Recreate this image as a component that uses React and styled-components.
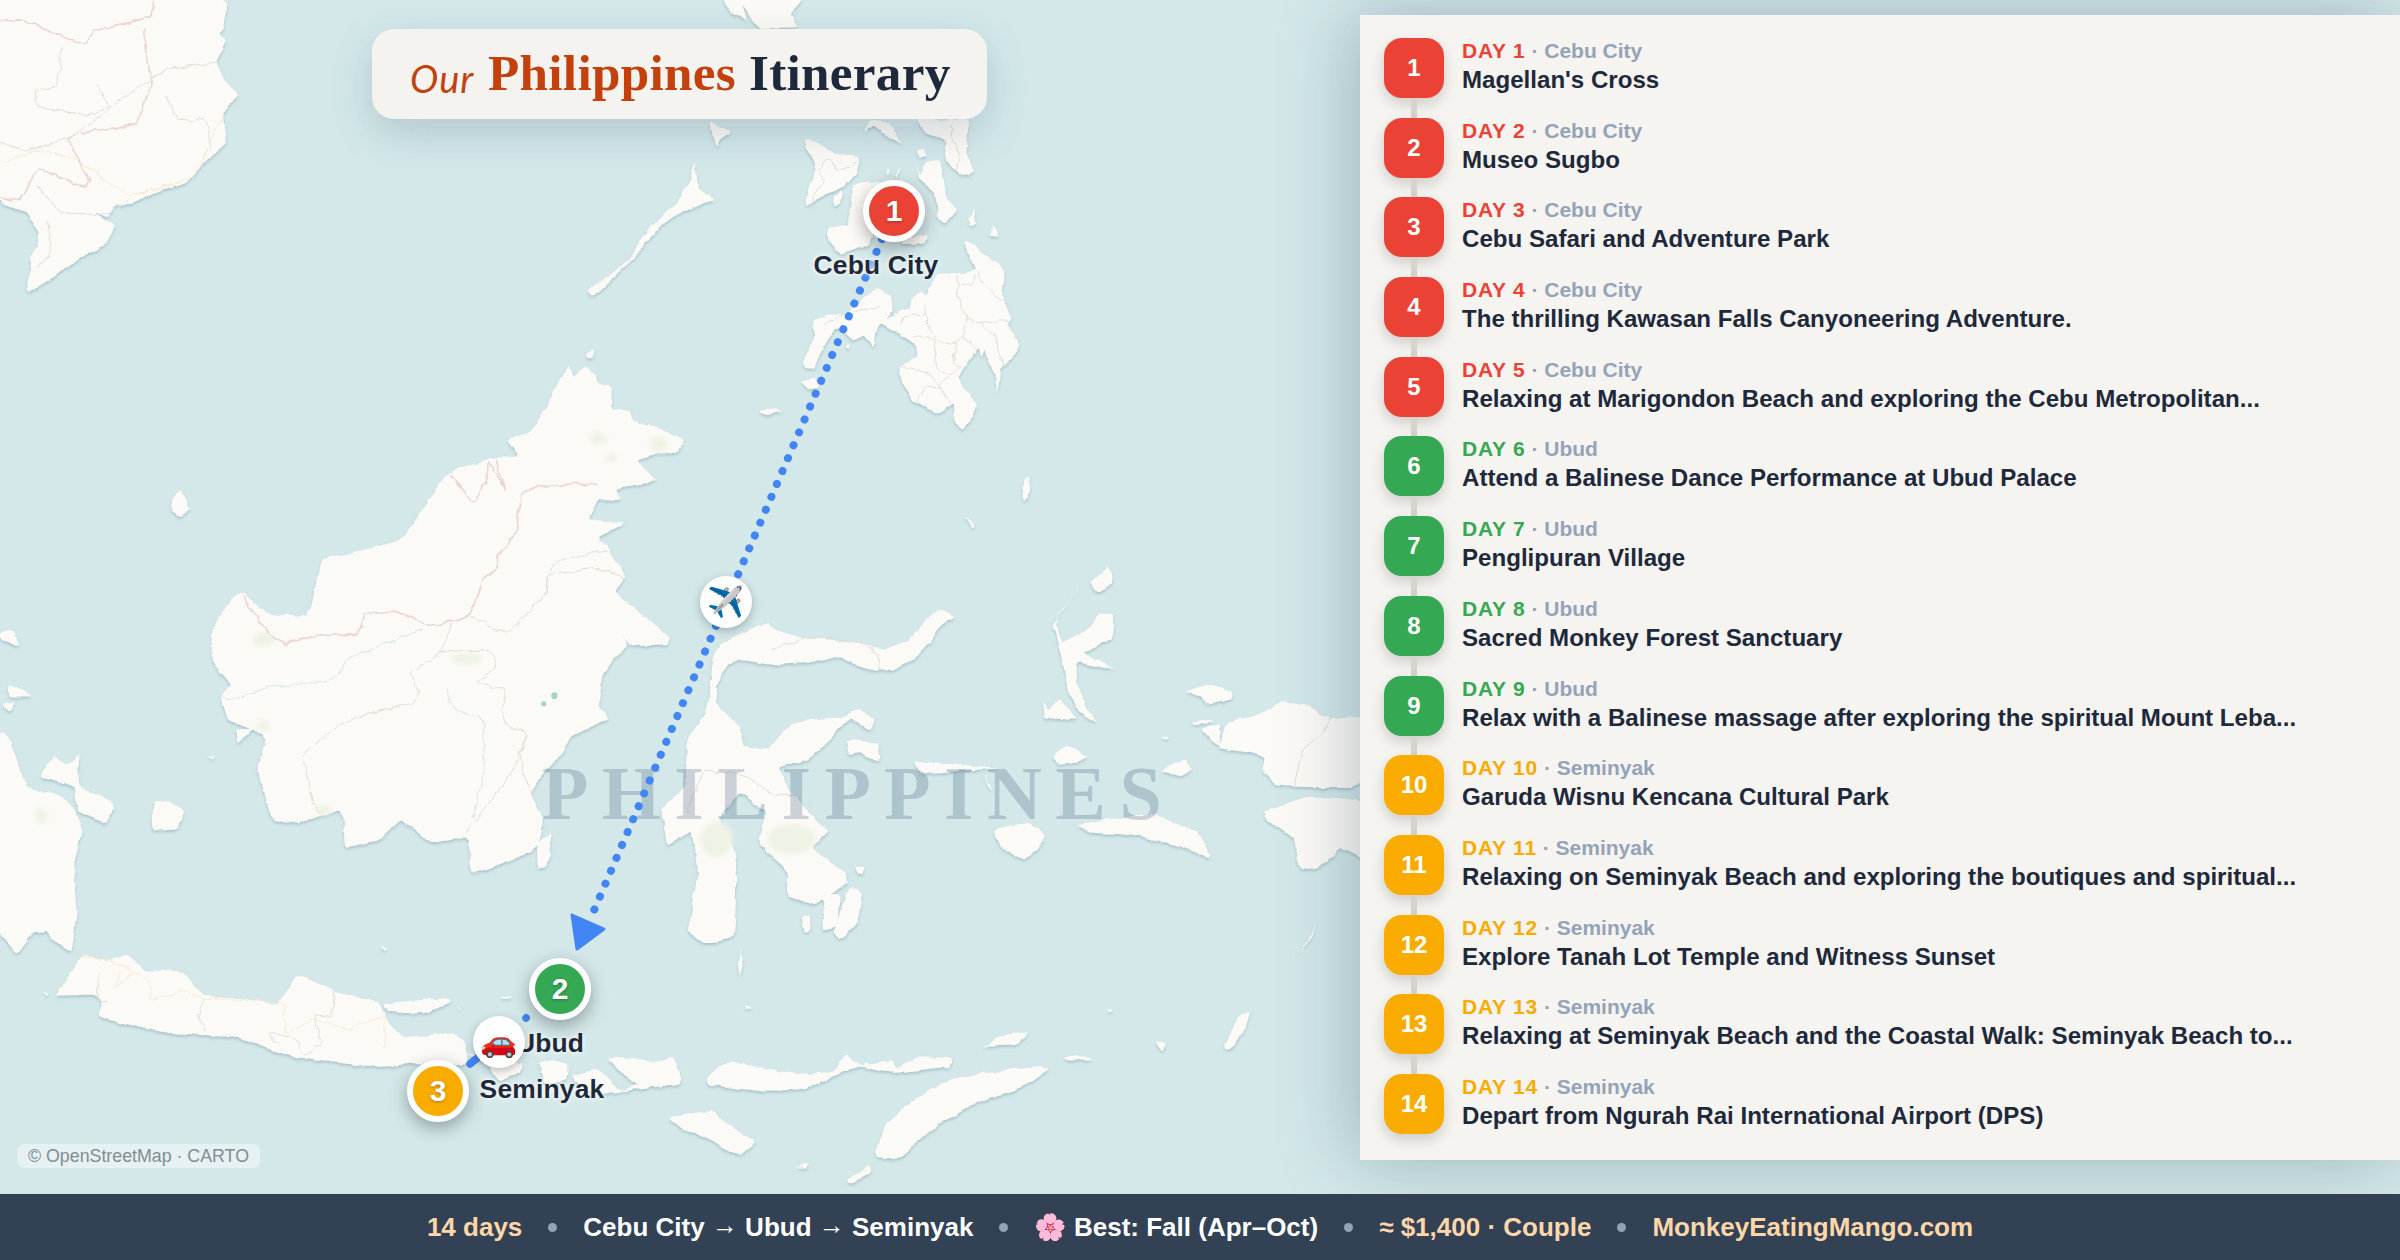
import React from "react";
import styled, { createGlobalStyle } from "styled-components";

const GlobalStyle = createGlobalStyle`
  html, body { margin: 0; padding: 0; background: #d4e8ea; }
  body { font-family: "Liberation Sans", Arial, sans-serif; }
  #root { width: 2400px; height: 1260px; overflow: hidden; }
`;

/* ---------- map data: each sheet keeps the coordinates it was traced in ---------- */
const spline = (pts, sheet, closed = true) => {
  const [ox, oy, sx, sy] = sheet;
  const p = pts.map(([x, y]) => [ox + x * sx, oy + y * sy]);
  const n = p.length;
  const at = (i) => (closed ? p[(i + n) % n] : p[Math.max(0, Math.min(n - 1, i))]);
  let d = `M${p[0][0].toFixed(1)} ${p[0][1].toFixed(1)}`;
  const end = closed ? n : n - 1;
  for (let i = 0; i < end; i++) {
    const a = at(i - 1), b = at(i), c = at(i + 1), e = at(i + 2);
    const k = 0.08;
    d += `C${(b[0] + (c[0] - a[0]) * k).toFixed(1)} ${(b[1] + (c[1] - a[1]) * k).toFixed(1)} ${(c[0] - (e[0] - b[0]) * k).toFixed(1)} ${(c[1] - (e[1] - b[1]) * k).toFixed(1)} ${c[0].toFixed(1)} ${c[1].toFixed(1)}`;
  }
  return closed ? d + "Z" : d;
};

const Z1 = [0, 0, 0.6378, 1 / 3];
const Z5 = [0, 320, 0.4464, 0.3827];
const Z6 = [600, 500, 0.4847, 0.4464];
const Z7 = [0, 900, 0.4464, 1 / 3];
const Z9 = [760, 110, 1 / 3, 1 / 3];
const Z11 = [1150, 600, 1 / 3, 1 / 3];

const sheets = [
  {
    t: Z1,
    land: [
      [[340,-6],[350,60],[345,100],[355,130],[340,190],[360,260],[370,290],[350,340],[355,420],[335,470],[320,490],[290,550],[240,580],[210,610],[180,620],[170,650],[150,640],[180,680],[165,735],[130,770],[85,830],[45,875],[40,860],[50,780],[60,700],[40,640],[0,600],[-10,300],[-10,-6]],
      [[1135,-6],[1150,40],[1170,60],[1165,20],[1190,80],[1250,84],[1240,40],[1255,-6]],
      [[1115,368],[1145,395],[1130,420],[1125,440],[1118,410]],
      [[1090,490],[1095,560],[1120,600],[1100,610],[1040,670],[1000,760],[930,890],[925,870],[985,780],[1020,680],[1060,610],[1080,550]],
    ],
    pink: [
      [[0,65],[40,60],[70,90],[130,130],[150,90],[235,50],[240,0]],
      [[225,90],[235,250],[210,370],[110,410],[140,540],[130,560],[60,510],[30,600],[0,590]],
    ],
    grey: [
      [[95,140],[90,250],[55,280],[60,320],[150,340],[260,210],[340,190]],
      [[260,290],[280,360],[320,360],[330,440]],
      [[150,250],[170,330],[110,410],[40,450],[0,430]],
      [[60,560],[100,640],[170,640],[200,600]],
      [[75,660],[80,760],[60,800]],
    ],
    road: [[[0,490],[60,450],[120,480],[200,580],[300,530],[350,340]]],
  },
  {
    t: Z5,
    land: [
      [[1275,120],[1285,150],[1315,122],[1345,170],[1370,180],[1370,230],[1410,235],[1420,265],[1480,285],[1530,310],[1520,340],[1430,370],[1465,420],[1380,440],[1390,470],[1340,470],[1320,520],[1395,530],[1340,570],[1365,600],[1400,670],[1380,710],[1440,770],[1500,830],[1490,850],[1410,850],[1395,820],[1400,850],[1350,930],[1345,1010],[1360,1040],[1280,1090],[1260,1130],[1190,1230],[1215,1300],[1200,1380],[1060,1445],[1050,1360],[1020,1355],[960,1360],[900,1305],[850,1355],[775,1375],[765,1280],[670,1315],[610,1300],[580,1170],[595,1100],[560,1070],[510,1040],[495,985],[515,950],[475,890],[480,800],[525,720],[545,715],[600,765],[690,770],[720,630],[780,610],[900,570],[1000,405],[1090,365],[1160,355],[1140,310],[1190,290],[1240,190]],
      [[385,470],[405,450],[425,490],[405,515],[390,500]],
      [[1310,85],[1328,78],[1325,95],[1310,97]],
      [[95,1190],[120,1140],[150,1160],[175,1135],[180,1220],[255,1260],[240,1310],[175,1280],[165,1220]],
      [[345,1265],[380,1258],[410,1290],[395,1330],[345,1330]],
      [[0,1080],[20,1090],[60,1220],[110,1235],[155,1260],[185,1330],[165,1440],[165,1580],[-10,1580],[-10,1080]],
      [[0,820],[30,812],[40,848],[10,840]],
      [[20,955],[40,960],[70,985],[20,985]],
      [[5,1000],[30,1000],[22,1022],[10,1020]],
      [[533,1072],[565,1070],[535,1102]],
      [[1205,1370],[1235,1345],[1225,1425],[1205,1425]],
      [[470,1140],[482,1138],[478,1148]],
    ],
    forest: [[590,835,24,20],[1475,325,20,22],[1340,310,20,16],[1370,362,14,12],[1045,885,36,16],[590,1060,16,14],[725,1280,20,14],[92,1295,14,22]],
    pool: [[1218,1003,6,7],[1242,982,7,9]],
    pink: [
      [[545,720],[590,800],[640,845],[720,825],[800,820],[820,770],[900,765],[960,800],[1050,770],[1080,680],[1110,650],[1120,600],[1155,560],[1170,450],[1250,430],[1340,430]],
      [[1010,405],[1060,475],[1090,420],[1095,370],[1130,440],[1110,370]],
    ],
    grey: [
      [[1050,770],[1135,815],[1220,720],[1230,665],[1340,650],[1405,680]],
      [[1015,790],[985,870],[925,920],[935,970],[920,1005],[815,1030],[750,1070],[680,1140],[700,1260],[720,1290]],
      [[985,870],[1090,860],[1110,910],[1070,945],[1125,965],[1130,1050],[1180,1085],[1135,1200],[1045,1340]],
      [[1180,1085],[1165,1130],[1185,1230],[1225,1230]],
    ],
    water: [
      [[945,810],[790,880],[740,940],[600,960],[530,990],[500,985]],
      [[1000,960],[1005,1000],[1040,1030],[1085,1050],[1080,1200],[1060,1300]],
      [[1220,720],[1240,640],[1360,600]],
    ],
  },
  {
    t: Z6,
    land: [
      [[730,260],[700,290],[660,345],[610,378],[570,382],[530,372],[500,350],[430,365],[350,368],[280,358],[250,385],[240,450],[290,510],[300,550],[350,555],[395,500],[500,485],[530,470],[565,490],[555,515],[515,490],[480,530],[430,580],[370,600],[400,660],[450,720],[470,740],[440,780],[500,830],[510,860],[440,905],[385,880],[385,830],[330,770],[340,700],[290,660],[250,710],[280,800],[275,975],[210,990],[185,960],[200,840],[190,745],[140,770],[130,690],[175,640],[180,540],[215,480],[225,430],[235,350],[250,325],[320,285],[345,278],[380,298],[430,308],[520,318],[590,335],[640,310],[670,270],[700,245]],
      [[1050,150],[1055,185],[1030,205],[1015,185]],
      [[990,195],[945,260],[945,300],[955,320],[1005,290],[1030,255],[1060,260],[1055,310],[1000,340],[1060,380],[985,365],[985,420],[1025,500],[985,470],[965,420],[950,340],[935,280]],
      [[810,740],[880,725],[920,755],[880,805],[830,780]],
      [[990,730],[1080,710],[1140,705],[1230,745],[1260,800],[1180,770],[1085,750],[1010,745]],
      [[1370,705],[1460,665],[1580,680],[1580,800],[1530,780],[1480,825],[1445,825],[1430,760]],
      [[650,585],[700,590],[820,600],[700,610],[660,610]],
      [[510,540],[570,545],[575,585],[540,570],[515,570]],
      [[465,890],[495,885],[490,950],[460,960]],
      [[515,870],[540,880],[530,945],[495,985],[485,965]],
      [[415,935],[430,935],[432,965],[420,968]],
      [[525,825],[545,825],[540,842],[530,840]],
      [[935,575],[965,550],[1005,580],[950,590]],
      [[915,450],[925,470],[950,450],[980,490],[940,490],[918,485]],
      [[225,1290],[260,1260],[330,1270],[400,1285],[480,1280],[510,1245],[540,1265],[600,1255],[610,1275],[650,1250],[720,1250],[720,1270],[650,1280],[600,1285],[530,1270],[420,1320],[340,1325],[230,1310]],
      [[20,1250],[70,1250],[120,1265],[150,1250],[165,1305],[100,1315],[50,1290]],
      [[145,1385],[230,1370],[290,1420],[320,1440],[285,1465],[200,1420]],
      [[570,1470],[590,1400],[640,1350],[720,1300],[880,1270],[925,1275],[880,1310],[780,1350],[700,1400],[620,1470]],
      [[790,1225],[840,1195],[880,1195],[860,1220],[800,1225]],
      [[1290,1225],[1315,1160],[1340,1145],[1330,1190],[1300,1230]],
      [[510,1525],[555,1490],[555,1505],[520,1530]],
      [[405,1495],[428,1485],[425,1495]],
      [[1145,1215],[1165,1215],[1158,1235]],
      [[960,1248],[1010,1250],[1010,1258],[965,1255]],
      [[288,1005],[294,1040],[288,1068],[285,1040]],
      [[752,35],[770,60],[765,65]],
      [[1435,990],[1445,1015],[1475,955],[1465,985],[1445,1015]],
      [[300,1132],[315,1140],[302,1142]],
      [[1045,1138],[1056,1140],[1048,1146]],
      [[795,615],[810,650],[800,640]],
    ],
    forest: [[240,760,34,40],[395,760,50,34]],
    grey: [
      [[355,335],[430,310],[540,320],[575,350],[575,380]],
      [[180,700],[215,610],[300,620],[360,660],[415,665],[465,735]],
    ],
  },
  {
    t: Z7,
    land: [
      [[130,285],[150,240],[185,165],[240,185],[285,165],[330,210],[405,215],[440,265],[460,290],[540,295],[620,310],[660,235],[690,235],[750,275],[850,310],[870,370],[910,410],[1000,400],[1040,420],[1040,490],[930,490],[850,500],[700,480],[640,465],[540,415],[360,395],[225,350],[230,310],[210,285]],
      [[865,310],[1000,295],[1005,310],[940,340],[880,335]],
      [[1045,465],[1165,490],[1165,515],[1120,540],[1090,490]],
      [[1210,490],[1240,478],[1270,490],[1268,540],[1220,550]],
      [[1280,530],[1340,510],[1390,570],[1440,540],[1375,470],[1450,490],[1510,470],[1520,540],[1460,560],[1390,575],[1330,580]],
      [[1500,650],[1568,640],[1568,690],[1530,690]],
      [[0,-10],[165,-10],[160,150],[130,130],[100,90],[80,90],[40,160],[20,130],[0,100]],
      [[852,140],[865,140],[862,150]],
      [[1120,295],[1150,292],[1135,300]],
      [[100,270],[110,275],[108,285]],
      [[1025,322],[1035,328],[1030,332]],
    ],
    grey: [
      [[460,290],[445,350],[460,395]],
      [[750,280],[740,350],[705,350],[720,430],[680,465],[665,420],[600,400],[625,430]],
      [[220,220],[220,300],[240,305]],
    ],
    road: [
      [[185,170],[260,190],[330,240],[340,300],[410,270],[460,295],[630,310],[640,400],[700,360],[780,385],[860,350],[860,440]],
      [[300,220],[260,260],[270,210]],
    ],
  },
  {
    t: Z9,
    land: [
      [[130,95],[160,90],[230,135],[300,145],[290,190],[245,235],[190,255],[145,285],[140,250],[165,165]],
      [[222,262],[245,245],[240,280],[220,285]],
      [[275,225],[330,215],[370,225],[330,400],[300,410],[240,430],[205,385],[210,355],[260,340],[275,280]],
      [[430,390],[500,375],[495,400],[430,405]],
      [[470,170],[480,195],[500,160],[540,155],[555,230],[560,265],[590,300],[555,340],[530,320],[525,250],[480,210]],
      [[475,30],[620,30],[620,130],[640,185],[595,190],[560,150],[555,90],[500,70]],
      [[310,70],[330,35],[380,40],[425,100],[370,70],[340,50]],
      [[470,125],[490,115],[500,140],[480,145]],
      [[630,320],[640,295],[645,345],[630,345]],
      [[695,365],[705,350],[715,375],[695,380]],
      [[610,390],[640,400],[670,430],[735,480],[730,570],[750,620],[745,650],[770,690],[770,730],[730,770],[720,780],[715,850],[705,800],[690,760],[675,720],[665,740],[650,720],[600,800],[610,830],[650,880],[640,920],[605,960],[585,925],[580,880],[530,910],[470,880],[430,830],[420,770],[470,740],[465,700],[415,670],[365,640],[420,605],[450,595],[460,560],[480,545],[500,555],[530,490],[590,490],[650,480],[625,430]],
      [[130,750],[165,680],[160,640],[200,615],[260,610],[330,545],[350,535],[395,560],[400,600],[370,640],[345,680],[340,710],[310,680],[280,690],[255,670],[225,660],[195,700],[165,770],[135,770]],
      [[125,815],[160,800],[180,830],[150,840]],
      [[0,900],[40,895],[65,905],[20,915]],
      [[790,1110],[805,1105],[810,1140],[790,1170],[785,1150]],
      [[258,705],[270,705],[265,718]],
      [[380,175],[388,190],[380,190]],
      [[420,175],[415,200],[408,195]],
    ],
    grey: [
      [[180,180],[200,150],[240,180],[295,155]],
      [[170,180],[190,210],[170,250],[145,285]],
      [[590,500],[600,580],[620,620],[610,680],[590,700],[530,690],[500,640],[495,590]],
      [[420,640],[440,620],[495,610]],
      [[620,620],[660,640],[720,630],[745,640]],
      [[650,480],[670,520],[735,580]],
      [[660,640],[700,680],[730,770]],
      [[610,680],[650,720]],
      [[590,700],[580,760],[600,770],[565,800],[540,830],[570,880]],
      [[420,770],[500,790],[540,830],[505,830],[475,855],[470,880]],
      [[460,680],[520,690],[530,770],[560,790]],
      [[600,520],[640,525],[645,490]],
      [[575,40],[575,80],[600,130],[590,190]],
      [[190,640],[300,600],[360,590]],
    ],
  },
  {
    t: Z11,
    land: [
      [[205,440],[240,365],[330,345],[390,305],[470,315],[530,355],[640,355],[640,540],[600,560],[430,560],[380,555],[340,520],[345,470],[280,455],[240,450]],
      [[110,275],[170,255],[240,275],[245,295],[175,310],[150,290]],
      [[160,385],[210,380],[205,435],[180,420]],
      [[128,368],[185,360],[185,368],[135,375]],
      [[35,510],[100,485],[125,510],[90,530]],
      [[35,412],[60,410],[50,418]],
    ],
    grey: [
      [[540,355],[520,400],[470,435],[440,510],[430,560]],
    ],
  },
];

const patches = (key) =>
  sheets.flatMap((s) =>
    (s[key] || []).map(([x, y, rx, ry]) => ({
      cx: s.t[0] + x * s.t[2],
      cy: s.t[1] + y * s.t[3],
      rx: rx * s.t[2],
      ry: ry * s.t[3],
    }))
  );

/* ---------- layout ---------- */
const Page = styled.div`
  width: 2400px;
  height: 1260px;
  display: flex;
  flex-direction: column;
  overflow: hidden;
  color: #1e293b;
`;

const Stage = styled.main`
  position: relative;
  flex: 1;
  min-height: 0;
  display: flex;
  justify-content: flex-end;
  padding: 15px 0 34px;
  background: #d4e8ea;
`;

const MapArt = styled.svg`
  position: absolute;
  inset: 0;
  width: 100%;
  height: 100%;
`;

const Watermark = styled.div`
  position: absolute;
  left: 542px;
  top: 748px;
  font-family: "Liberation Serif", "Times New Roman", serif;
  font-weight: 700;
  font-size: 76px;
  line-height: 90px;
  letter-spacing: 13.4px;
  white-space: nowrap;
  color: rgba(71, 100, 130, 0.27);
`;

const TitleCard = styled.header`
  position: absolute;
  left: 372px;
  top: 29px;
  width: 615px;
  height: 90px;
  box-sizing: border-box;
  padding: 0 0 3px 38px;
  display: flex;
  align-items: center;
  background: #f5f3ef;
  border-radius: 22px;
  box-shadow: 0 14px 40px rgba(40, 70, 90, 0.2);
  font-family: "Liberation Serif", "Times New Roman", serif;
  font-weight: 700;
  font-size: 51.2px;
  letter-spacing: 0.3px;
  white-space: nowrap;
`;

const TitleScript = styled.span`
  width: 78px;
  font-family: Lato, "Liberation Sans", sans-serif;
  font-style: italic;
  font-weight: 400;
  font-size: 38px;
  letter-spacing: 1px;
  color: #c2410c;
  position: relative;
  top: 5px;
`;

const TitleAccent = styled.span`
  color: #c2410c;
  margin-right: 13px;
`;

const Pin = styled.div`
  position: absolute;
  left: ${(p) => p.$x}px;
  top: ${(p) => p.$y}px;
  width: 62px;
  height: 62px;
  margin: -31px 0 0 -31px;
  box-sizing: border-box;
  border: 6px solid #fff;
  border-radius: 50%;
  background: ${(p) => p.$color};
  box-shadow: 0 6px 18px rgba(0, 0, 0, 0.32);
  display: flex;
  align-items: center;
  justify-content: center;
  color: #fff;
  font-weight: 700;
  font-size: 30px;
  text-shadow: 0 1px 3px rgba(0, 0, 0, 0.3);
`;

const PlaceLabel = styled.div`
  position: absolute;
  left: ${(p) => p.$x}px;
  top: ${(p) => p.$y}px;
  transform: translate(-50%, -50%);
  font-weight: 700;
  font-size: 26.4px;
  letter-spacing: 0.2px;
  white-space: nowrap;
  color: #1e293b;
  text-shadow: 0 0 6px rgba(255, 255, 255, 0.9), 0 0 3px rgba(255, 255, 255, 0.9);
`;

const TransportStop = styled.div`
  position: absolute;
  left: ${(p) => p.$x}px;
  top: ${(p) => p.$y}px;
  width: 52px;
  height: 52px;
  margin: -26px 0 0 -26px;
  border-radius: 50%;
  background: #fff;
  box-shadow: 0 3px 10px rgba(0, 0, 0, 0.25);
  display: flex;
  align-items: center;
  justify-content: center;
  font-family: "Noto Color Emoji", "Liberation Sans", sans-serif;
  font-size: 30px;
  line-height: 1;
`;

const Credit = styled.div`
  position: absolute;
  left: 17px;
  top: 1144px;
  height: 24px;
  padding: 0 11px;
  display: flex;
  align-items: center;
  border-radius: 7px;
  background: rgba(255, 255, 255, 0.4);
  color: #838c91;
  font-size: 17.8px;
  white-space: nowrap;
`;

const Panel = styled.aside`
  position: relative;
  width: 1040px;
  box-sizing: border-box;
  padding: 23px 24px 26px 24px;
  display: flex;
  flex-direction: column;
  justify-content: space-between;
  background: #f6f4f0;
  box-shadow: -6px 0 70px rgba(30, 60, 80, 0.3);
`;

const DayRow = styled.div`
  display: flex;
  align-items: center;
  gap: 18px;
  height: 60px;
`;

const DayBadge = styled.div`
  position: relative;
  flex: none;
  width: 60px;
  height: 60px;
  border-radius: 18px;
  background: ${(p) => p.$color};
  box-shadow: 0 6px 14px rgba(0, 0, 0, 0.16);
  display: flex;
  align-items: center;
  justify-content: center;
  color: #fff;
  font-weight: 700;
  font-size: 24px;

  &::after {
    content: "";
    display: ${(p) => (p.$last ? "none" : "block")};
    position: absolute;
    left: 27px;
    top: 60px;
    width: 6px;
    height: 20px;
    background: #d6d3cc;
  }
`;

const DayText = styled.div`
  min-width: 0;
  position: relative;
  top: -2px;
`;

const DayMeta = styled.div`
  font-size: 21px;
  line-height: 27px;
  font-weight: 700;
  color: #94a3b8;
  white-space: nowrap;
`;

const DayTag = styled.span`
  color: ${(p) => p.$color};
  letter-spacing: 0.8px;
`;

const DayTitle = styled.div`
  font-size: 24.1px;
  line-height: 31px;
  font-weight: 700;
  color: #1e293b;
  white-space: nowrap;
`;

const Footer = styled.footer`
  flex: none;
  height: 66px;
  position: relative;
  display: flex;
  align-items: center;
  justify-content: center;
  gap: 26px;
  background: #334155;
  color: #fff;
  font-size: 26px;
  font-weight: 700;
  white-space: nowrap;
`;

const FooterItem = styled.span`
  color: ${(p) => (p.$warm ? "#fed7aa" : "#fff")};
`;

const FooterArrow = styled.span`
  position: relative;
  top: -2px;
`;

const Bullet = styled.i`
  width: 9px;
  height: 9px;
  border-radius: 50%;
  background: #94a3b8;
`;

const FooterEmoji = styled.span`
  font-family: "Noto Color Emoji", sans-serif;
  font-weight: 400;
`;

/* ---------- content ---------- */
const RED = "#ea4335";
const GREEN = "#34a853";
const AMBER = "#f9ab00";

const days = [
  ["Cebu City", RED, "Magellan's Cross"],
  ["Cebu City", RED, "Museo Sugbo"],
  ["Cebu City", RED, "Cebu Safari and Adventure Park"],
  ["Cebu City", RED, "The thrilling Kawasan Falls Canyoneering Adventure."],
  ["Cebu City", RED, "Relaxing at Marigondon Beach and exploring the Cebu Metropolitan..."],
  ["Ubud", GREEN, "Attend a Balinese Dance Performance at Ubud Palace"],
  ["Ubud", GREEN, "Penglipuran Village"],
  ["Ubud", GREEN, "Sacred Monkey Forest Sanctuary"],
  ["Ubud", GREEN, "Relax with a Balinese massage after exploring the spiritual Mount Leba..."],
  ["Seminyak", AMBER, "Garuda Wisnu Kencana Cultural Park"],
  ["Seminyak", AMBER, "Relaxing on Seminyak Beach and exploring the boutiques and spiritual..."],
  ["Seminyak", AMBER, "Explore Tanah Lot Temple and Witness Sunset"],
  ["Seminyak", AMBER, "Relaxing at Seminyak Beach and the Coastal Walk: Seminyak Beach to..."],
  ["Seminyak", AMBER, "Depart from Ngurah Rai International Airport (DPS)"],
];

const MapDrawing = () => (
  <MapArt viewBox="0 0 2400 1194" aria-hidden="true">
    <defs>
      <filter id="coast" filterUnits="userSpaceOnUse" x="-20" y="-20" width="2440" height="1234">
        <feTurbulence type="fractalNoise" baseFrequency="0.06" numOctaves="3" seed="4" result="noise" />
        <feDisplacementMap in="SourceGraphic" in2="noise" scale="6" xChannelSelector="R" yChannelSelector="G" result="rough" />
        <feDropShadow in="rough" dx="0" dy="2" stdDeviation="1.6" floodColor="#5a828c" floodOpacity="0.35" />
      </filter>
      <filter id="wiggle" filterUnits="userSpaceOnUse" x="-20" y="-20" width="2440" height="1234">
        <feTurbulence type="fractalNoise" baseFrequency="0.09" numOctaves="2" seed="9" result="noise" />
        <feDisplacementMap in="SourceGraphic" in2="noise" scale="7" xChannelSelector="R" yChannelSelector="G" />
      </filter>
      <filter id="soft">
        <feGaussianBlur stdDeviation="2.5" />
      </filter>
    </defs>
    <path filter="url(#coast)" fill="#fcfaf6" d={sheets.map((s) => s.land.map((l) => spline(l, s.t)).join("")).join("")} />
    <g fill="#eff3e6" filter="url(#soft)">
      {patches("forest").map((e) => <ellipse key={`${e.cx}-${e.cy}`} {...e} />)}
    </g>
    <g fill="#a9d3c9">
      {patches("pool").map((e) => <ellipse key={`${e.cx}-${e.cy}`} {...e} />)}
    </g>
    <g fill="none" strokeLinejoin="round" strokeLinecap="round" filter="url(#wiggle)">
      <path stroke="#f9ecd6" strokeWidth="1.2" d={sheets.map((s) => (s.road || []).map((l) => spline(l, s.t, false)).join("")).join("")} />
      <path stroke="#dbe9ea" strokeWidth="1.2" d={sheets.map((s) => (s.water || []).map((l) => spline(l, s.t, false)).join("")).join("")} />
      <path stroke="#e0dcd6" strokeWidth="1" d={sheets.map((s) => (s.grey || []).map((l) => spline(l, s.t, false)).join("")).join("")} />
      <path stroke="#ecd3d4" strokeWidth="1.6" d={sheets.map((s) => (s.pink || []).map((l) => spline(l, s.t, false)).join("")).join("")} />
    </g>
  </MapArt>
);

const RouteDrawing = () => (
  <MapArt viewBox="0 0 2400 1194" aria-hidden="true">
    <g stroke="#4285f4" fill="none" strokeLinecap="round">
      <path d="M894 211L589 922" strokeWidth="8" strokeDasharray="0.1 13.93" strokeDashoffset="-2.3" />
      <path d="M526 1018L526.2 1017.8M470 1064L482 1054" strokeWidth="7.5" />
    </g>
    <path d="M572 915L604 929L577 949Z" fill="#4285f4" stroke="#4285f4" strokeWidth="3" strokeLinejoin="round" />
  </MapArt>
);

export default function App() {
  return (
    <Page>
      <GlobalStyle />
      <Stage>
        <MapDrawing />
        <Watermark>PHILIPPINES</Watermark>
        <RouteDrawing />

        <TitleCard>
          <TitleScript>Our</TitleScript>
          <TitleAccent>Philippines</TitleAccent>
          <span>Itinerary</span>
        </TitleCard>

        <PlaceLabel $x={876} $y={265}>Cebu City</PlaceLabel>
        <PlaceLabel $x={550} $y={1043}>Ubud</PlaceLabel>
        <PlaceLabel $x={542} $y={1089}>Seminyak</PlaceLabel>

        <Pin $x={894} $y={211} $color={RED}>1</Pin>
        <Pin $x={560} $y={989} $color={GREEN}>2</Pin>
        <Pin $x={438} $y={1091} $color={AMBER}>3</Pin>

        <TransportStop $x={726} $y={602}>✈️</TransportStop>
        <TransportStop $x={499} $y={1042}>🚗</TransportStop>

        <Credit>© OpenStreetMap · CARTO</Credit>

        <Panel>
          {days.map(([city, color, title], i) => (
            <DayRow key={i}>
              <DayBadge $color={color} $last={i === days.length - 1}>{i + 1}</DayBadge>
              <DayText>
                <DayMeta>
                  <DayTag $color={color}>DAY {i + 1}</DayTag> · {city}
                </DayMeta>
                <DayTitle>{title}</DayTitle>
              </DayText>
            </DayRow>
          ))}
        </Panel>
      </Stage>
      <Footer>
        <FooterItem $warm>14 days</FooterItem>
        <Bullet />
        <FooterItem>Cebu City <FooterArrow>→</FooterArrow> Ubud <FooterArrow>→</FooterArrow> Seminyak</FooterItem>
        <Bullet />
        <FooterItem><FooterEmoji>🌸</FooterEmoji> Best: Fall (Apr–Oct)</FooterItem>
        <Bullet />
        <FooterItem $warm>≈ $1,400 · Couple</FooterItem>
        <Bullet />
        <FooterItem $warm>MonkeyEatingMango.com</FooterItem>
      </Footer>
    </Page>
  );
}
